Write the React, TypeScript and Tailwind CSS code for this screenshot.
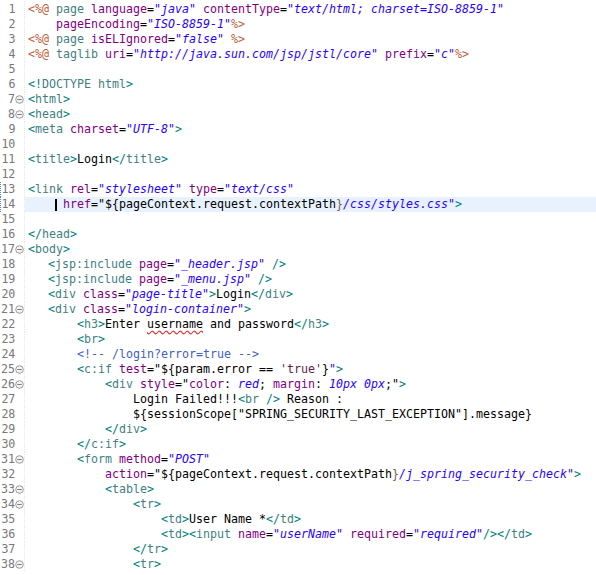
import React from "react";

const T = "text-[#008080]"; // tag delimiters
const N = "text-[#3F7F7F]"; // tag names
const A = "text-[#7F007F]"; // attribute names
const V = "text-[#2A00FF] italic"; // attribute values
const J = "text-[#BF5F3F]"; // jsp delimiters
const C = "text-[#3F5FBF]"; // comments
const K = "text-black";
const B = "text-[#7F5F3F]"; // el closing brace
const U = "text-black underline decoration-wavy decoration-[#e03030] underline-offset-2";

type Tok = [string, string];
type Line = { indent: string; fold?: boolean; toks: Tok[] };

const L0 = "pl-[3px]";
const L1 = "pl-[23px]";
const L2 = "pl-[52px]";
const L3 = "pl-[80px]";
const L4 = "pl-[108px]";
const L5 = "pl-[136px]";

const lines: Line[] = [
  { indent: L0, toks: [[J, "<%@"], [K, " "], [N, "page"], [K, " "], [A, "language"], [K, "="], [V, '"java"'], [K, " "], [A, "contentType"], [K, "="], [V, '"text/html; charset=ISO-8859-1"']] },
  { indent: "pl-[31px]", toks: [[A, "pageEncoding"], [K, "="], [V, '"ISO-8859-1"'], [J, "%>"]] },
  { indent: L0, toks: [[J, "<%@"], [K, " "], [N, "page"], [K, " "], [A, "isELIgnored"], [K, "="], [V, '"false"'], [K, " "], [J, "%>"]] },
  { indent: L0, toks: [[J, "<%@"], [K, " "], [N, "taglib"], [K, " "], [A, "uri"], [K, "="], [V, '"http://java.sun.com/jsp/jstl/core"'], [K, " "], [A, "prefix"], [K, "="], [V, '"c"'], [J, "%>"]] },
  { indent: L0, toks: [] },
  { indent: L0, toks: [[T, "<!"], [N, "DOCTYPE html"], [T, ">"]] },
  { indent: L0, fold: true, toks: [[T, "<"], [N, "html"], [T, ">"]] },
  { indent: L0, fold: true, toks: [[T, "<"], [N, "head"], [T, ">"]] },
  { indent: L0, toks: [[T, "<"], [N, "meta"], [K, " "], [A, "charset"], [K, "="], [V, '"UTF-8"'], [T, ">"]] },
  { indent: L0, toks: [] },
  { indent: L0, toks: [[T, "<"], [N, "title"], [T, ">"], [K, "Login"], [T, "</"], [N, "title"], [T, ">"]] },
  { indent: L0, toks: [] },
  { indent: L0, toks: [[T, "<"], [N, "link"], [K, " "], [A, "rel"], [K, "="], [V, '"stylesheet"'], [K, " "], [A, "type"], [K, "="], [V, '"text/css"']] },
  { indent: "pl-[38px]", toks: [[A, "href"], [K, "="], [K, '"${pageContext.request.contextPath'], [B, "}"], [V, '/css/styles.css"'], [T, ">"]] },
  { indent: L0, toks: [] },
  { indent: L0, toks: [[T, "</"], [N, "head"], [T, ">"]] },
  { indent: L0, fold: true, toks: [[T, "<"], [N, "body"], [T, ">"]] },
  { indent: L1, toks: [[T, "<"], [N, "jsp:include"], [K, " "], [A, "page"], [K, "="], [V, '"_header.jsp"'], [K, " "], [T, "/>"]] },
  { indent: L1, toks: [[T, "<"], [N, "jsp:include"], [K, " "], [A, "page"], [K, "="], [V, '"_menu.jsp"'], [K, " "], [T, "/>"]] },
  { indent: L1, toks: [[T, "<"], [N, "div"], [K, " "], [A, "class"], [K, "="], [V, '"page-title"'], [T, ">"], [K, "Login"], [T, "</"], [N, "div"], [T, ">"]] },
  { indent: L1, fold: true, toks: [[T, "<"], [N, "div"], [K, " "], [A, "class"], [K, "="], [V, '"login-container"'], [T, ">"]] },
  { indent: L2, toks: [[T, "<"], [N, "h3"], [T, ">"], [K, "Enter "], [U, "username"], [K, " and password"], [T, "</"], [N, "h3"], [T, ">"]] },
  { indent: L2, toks: [[T, "<"], [N, "br"], [T, ">"]] },
  { indent: L2, toks: [[C, "<!-- /login?error=true -->"]] },
  { indent: L2, fold: true, toks: [[T, "<"], [N, "c:if"], [K, " "], [A, "test"], [K, "="], [K, '"${param.error == '], ["text-[#5a1f4a]", "'true'"], [K, "}"], [V, '"'], [T, ">"]] },
  { indent: L3, fold: true, toks: [[T, "<"], [N, "div"], [K, " "], [A, "style"], [K, "="], [K, '"'], [A, "color"], [K, ": "], [V, "red"], [K, "; "], [A, "margin"], [K, ": "], [V, "10px 0px"], [K, ';"'], [T, ">"]] },
  { indent: L4, toks: [[K, "Login Failed!!!"], [T, "<"], [N, "br"], [K, " "], [T, "/>"], [K, " Reason :"]] },
  { indent: L4, toks: [[K, '${sessionScope["SPRING_SECURITY_LAST_EXCEPTION"].message}']] },
  { indent: L3, toks: [[T, "</"], [N, "div"], [T, ">"]] },
  { indent: L2, toks: [[T, "</"], [N, "c:if"], [T, ">"]] },
  { indent: L2, fold: true, toks: [[T, "<"], [N, "form"], [K, " "], [A, "method"], [K, "="], [V, '"POST"']] },
  { indent: L3, toks: [[A, "action"], [K, "="], [K, '"${pageContext.request.contextPath'], [B, "}"], [V, '/j_spring_security_check"'], [T, ">"]] },
  { indent: L3, fold: true, toks: [[T, "<"], [N, "table"], [T, ">"]] },
  { indent: L4, fold: true, toks: [[T, "<"], [N, "tr"], [T, ">"]] },
  { indent: L5, toks: [[T, "<"], [N, "td"], [T, ">"], [K, "User Name *"], [T, "</"], [N, "td"], [T, ">"]] },
  { indent: L5, toks: [[T, "<"], [N, "td"], [T, "><"], [N, "input"], [K, " "], [A, "name"], [K, "="], [V, '"userName"'], [K, " "], [A, "required"], [K, "="], [V, '"required"'], [T, "/></"], [N, "td"], [T, ">"]] },
  { indent: L4, toks: [[T, "</"], [N, "tr"], [T, ">"]] },
  { indent: L4, fold: true, toks: [[T, "<"], [N, "tr"], [T, ">"]] },
];

function FoldIcon() {
  return (
    <svg width="9" height="9" viewBox="0 0 9 9">
      <circle cx="4.5" cy="4.5" r="3.8" fill="#f4f4f4" stroke="#9a9a9a" strokeWidth="1" />
      <line x1="2.3" y1="4.5" x2="6.7" y2="4.5" stroke="#7a7a7a" strokeWidth="1" />
    </svg>
  );
}

export default function App() {
  return (
    <div className="w-[596px] h-[575px] bg-white overflow-hidden pt-[2px] font-['DejaVu_Sans_Mono',monospace] text-[11.63px] leading-[15px]">
      {lines.map((ln, i) => {
        const n = i + 1;
        const current = n === 14;
        const changed = n === 13 || n === 14;
        return (
          <div key={n} className="flex h-[15px]">
            <div
              className={
                "flex w-[25px] shrink-0 border-r border-[#e8e8e8] border-l border-dotted " +
                (changed ? "border-l-[#4a86d8]" : "border-l-transparent")
              }
            >
              <span className="w-[15px] text-right text-[#787878]">{n}</span>
              <span className="w-[9px] flex items-center justify-center">{ln.fold ? <FoldIcon /> : null}</span>
            </div>
            <div className={"relative flex-1 whitespace-pre " + ln.indent + (current ? " bg-[#e8f2fe]" : "")}>
              {current ? <span className="absolute left-[30px] top-[2px] h-[12px] w-[2px] bg-black" /> : null}
              {ln.toks.map((t, j) => (
                <span key={j} className={t[0]}>
                  {t[1]}
                </span>
              ))}
            </div>
          </div>
        );
      })}
    </div>
  );
}
